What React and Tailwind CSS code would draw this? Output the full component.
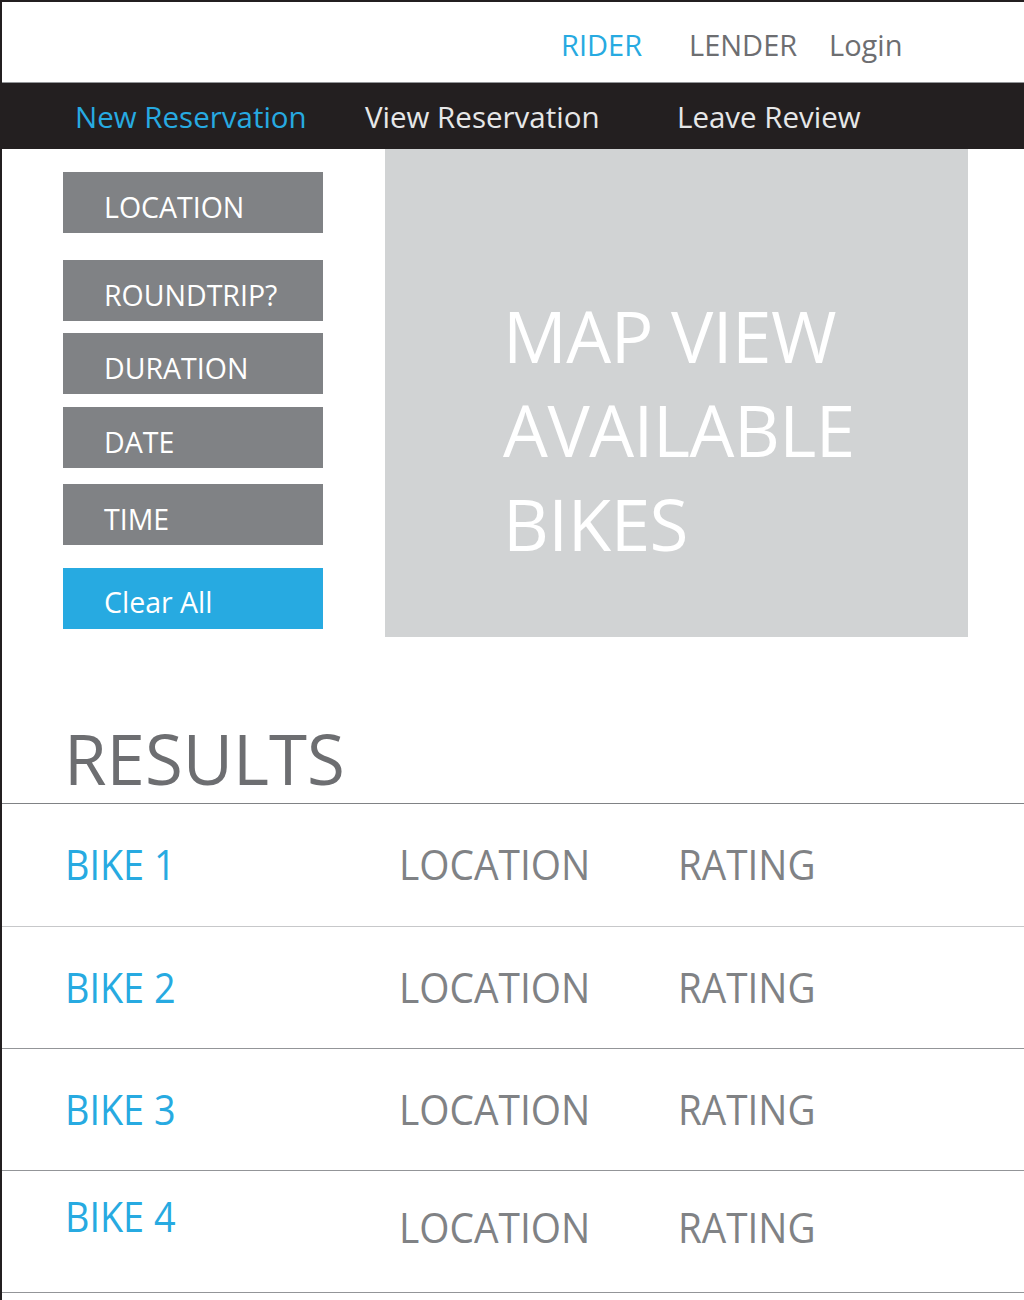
import React from 'react'

const filters = [
  { label: 'LOCATION', mt: 'mt-[23px]' },
  { label: 'ROUNDTRIP?', mt: 'mt-[27px]' },
  { label: 'DURATION', mt: 'mt-[12px]' },
  { label: 'DATE', mt: 'mt-[13px]' },
  { label: 'TIME', mt: 'mt-[16px]' },
]

const results = [
  { name: 'BIKE 1', h: 'h-[123px]', border: 'border-[#c7c8ca]', namePt: 'pt-[39px]', restPt: 'pt-[39px]' },
  { name: 'BIKE 2', h: 'h-[122px]', border: 'border-[#939598]', namePt: 'pt-[39px]', restPt: 'pt-[39px]' },
  { name: 'BIKE 3', h: 'h-[122px]', border: 'border-[#939598]', namePt: 'pt-[39px]', restPt: 'pt-[39px]' },
  { name: 'BIKE 4', h: 'h-[122px]', border: 'border-[#939598]', namePt: 'pt-[24px]', restPt: 'pt-[35px]' },
]

export default function App() {
  return (
    <div className="w-[1024px] h-[1300px] bg-white border-t-2 border-l-2 border-[#231f20] font-['Open_Sans',sans-serif] overflow-hidden">
      {/* top bar */}
      <div className="h-[81px] border-b border-[#939598] pt-[28px] pl-[559px] flex text-[29px] leading-none">
        <span className="w-[128px] text-[#27aae1]">RIDER</span>
        <span className="w-[140px] text-[#6d6e71]">LENDER</span>
        <span className="text-[#6d6e71]">Login</span>
      </div>

      {/* nav */}
      <div className="h-[66px] bg-[#231f20] flex pt-[19px] pl-[73px] text-[29.5px] leading-none">
        <span className="w-[290px] text-[#27aae1]">New Reservation</span>
        <span className="w-[312px] text-[#e6e7e8]">View Reservation</span>
        <span className="text-[#e6e7e8]">Leave Review</span>
      </div>

      {/* filters + map */}
      <div className="flex">
        <div className="w-[383px] pl-[61px] flex flex-col">
          {filters.map((f) => (
            <button
              key={f.label}
              className={`${f.mt} w-[260px] h-[61px] bg-[#808285] text-white text-left pl-[41px] pt-[9px] text-[28.5px] leading-none`}
            >
              {f.label}
            </button>
          ))}
          <button className="mt-[23px] w-[260px] h-[61px] bg-[#27aae1] text-white text-left pl-[41px] pt-[7px] text-[28.5px] leading-none">
            Clear All
          </button>
        </div>
        <div className="w-[583px] h-[488px] bg-[#d1d3d4] pl-[118px] pt-[140px] text-white text-[71px] leading-[94px] tracking-[-0.5px]">
          <div>MAP VIEW</div>
          <div>AVAILABLE</div>
          <div>BIKES</div>
        </div>
      </div>

      {/* results */}
      <h2 className="mt-[87px] mb-[10px] pl-[62px] text-[69px] leading-none text-[#6d6e71]">RESULTS</h2>

      <div className="-ml-[2px] border-t border-[#808285]">
        {results.map((r) => (
          <div key={r.name} className={`${r.h} border-b ${r.border} flex text-[42px] leading-none`}>
            <div className={`w-[399px] pl-[65px] ${r.namePt}`}>
              <span className="inline-block origin-left scale-x-[0.9] text-[#27aae1]">{r.name}</span>
            </div>
            <div className={`w-[279px] ${r.restPt}`}>
              <span className="inline-block origin-left scale-x-[0.925] text-[#808285]">LOCATION</span>
            </div>
            <div className={r.restPt}>
              <span className="inline-block origin-left scale-x-[0.92] text-[#808285]">RATING</span>
            </div>
          </div>
        ))}
      </div>
    </div>
  )
}
